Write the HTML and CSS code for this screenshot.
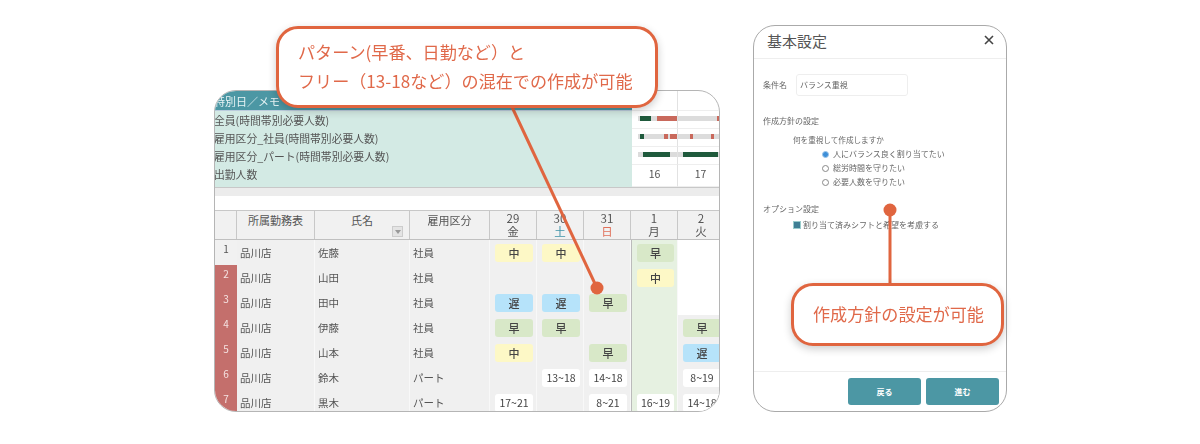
FILE: index.html
```html
<!DOCTYPE html>
<html lang="ja">
<head>
    <meta charset="UTF-8">
    <title>シフト作成</title>
    <link rel="stylesheet" href="styles.css">
</head>
<body>
<div class="page">
    <div class="screen">
        <div class="sum head">
            <div class="sum-label">特別日／メモ</div>
            <div class="sum-cell"></div>
            <div class="sum-cell"></div>
        </div>
        <div class="sum">
            <div class="sum-label">全員(時間帯別必要人数)</div>
            <div class="sum-cell">
                <svg class="bars" width="46" height="18"><rect x="6" y="5" width="40" height="5" fill="#dcdcdc"/><rect x="8" y="5" width="11" height="5" fill="#1f5a3c"/><rect x="25" y="5" width="20" height="5" fill="#c9695c"/></svg>
            </div>
            <div class="sum-cell">
                <svg class="bars" width="46" height="18"><rect x="0" y="5" width="46" height="5" fill="#dcdcdc"/><rect x="39" y="5" width="4" height="5" fill="#c9695c"/></svg>
            </div>
        </div>
        <div class="sum">
            <div class="sum-label">雇用区分_社員(時間帯別必要人数)</div>
            <div class="sum-cell">
                <svg class="bars" width="46" height="18"><rect x="6" y="5" width="40" height="5" fill="#dcdcdc"/><rect x="8" y="5" width="4" height="5" fill="#1f5a3c"/><rect x="32" y="5" width="4" height="5" fill="#c9695c"/><rect x="38" y="5" width="7" height="5" fill="#c9695c"/></svg>
            </div>
            <div class="sum-cell">
                <svg class="bars" width="46" height="18"><rect x="0" y="5" width="46" height="5" fill="#dcdcdc"/><rect x="12" y="5" width="3" height="5" fill="#c9695c"/><rect x="33" y="5" width="3" height="5" fill="#c9695c"/></svg>
            </div>
        </div>
        <div class="sum">
            <div class="sum-label">雇用区分_パート(時間帯別必要人数)</div>
            <div class="sum-cell">
                <svg class="bars" width="46" height="18"><rect x="6" y="5" width="40" height="5" fill="#dcdcdc"/><rect x="11" y="5" width="27" height="5" fill="#1f5a3c"/></svg>
            </div>
            <div class="sum-cell">
                <svg class="bars" width="46" height="18"><rect x="0" y="5" width="46" height="5" fill="#dcdcdc"/><rect x="5" y="5" width="35" height="5" fill="#1f5a3c"/></svg>
            </div>
        </div>
        <div class="sum last">
            <div class="sum-label">出勤人数</div>
            <div class="sum-cell">16</div>
            <div class="sum-cell">17</div>
        </div>
        <div class="strip"></div>
        <div class="gap"></div>

        <div class="row thead">
            <div class="th"></div>
            <div class="th">所属勤務表</div>
            <div class="th th-name">氏名<span class="filter"></span></div>
            <div class="th">雇用区分</div>
            <div class="th th-day">29<br>金</div>
            <div class="th th-day">30<br><span class="sat">土</span></div>
            <div class="th th-day">31<br><span class="sun">日</span></div>
            <div class="th th-day">1<br>月</div>
            <div class="th th-day">2<br>火</div>
        </div>

        <div class="row">
            <div class="no">1</div><div class="td">品川店</div><div class="td">佐藤</div><div class="td">社員</div>
            <div class="td-day"><span class="chip yellow">中</span></div>
            <div class="td-day"><span class="chip yellow">中</span></div>
            <div class="td-day"></div>
            <div class="td-day mon"><span class="chip green">早</span></div>
            <div class="td-day free"></div>
        </div>
        <div class="row">
            <div class="no red">2</div><div class="td">品川店</div><div class="td">山田</div><div class="td">社員</div>
            <div class="td-day"></div>
            <div class="td-day"></div>
            <div class="td-day"></div>
            <div class="td-day mon"><span class="chip yellow">中</span></div>
            <div class="td-day free"></div>
        </div>
        <div class="row">
            <div class="no red">3</div><div class="td">品川店</div><div class="td">田中</div><div class="td">社員</div>
            <div class="td-day"><span class="chip blue">遅</span></div>
            <div class="td-day"><span class="chip blue">遅</span></div>
            <div class="td-day"><span class="chip green">早</span></div>
            <div class="td-day mon"></div>
            <div class="td-day free"></div>
        </div>
        <div class="row">
            <div class="no red">4</div><div class="td">品川店</div><div class="td">伊藤</div><div class="td">社員</div>
            <div class="td-day"><span class="chip green">早</span></div>
            <div class="td-day"><span class="chip green">早</span></div>
            <div class="td-day"></div>
            <div class="td-day mon"></div>
            <div class="td-day"><span class="chip green">早</span></div>
        </div>
        <div class="row">
            <div class="no red">5</div><div class="td">品川店</div><div class="td">山本</div><div class="td">社員</div>
            <div class="td-day"><span class="chip yellow">中</span></div>
            <div class="td-day"></div>
            <div class="td-day"><span class="chip green">早</span></div>
            <div class="td-day mon"></div>
            <div class="td-day"><span class="chip blue">遅</span></div>
        </div>
        <div class="row">
            <div class="no red">6</div><div class="td">品川店</div><div class="td">鈴木</div><div class="td">パート</div>
            <div class="td-day"></div>
            <div class="td-day"><span class="chip white">13~18</span></div>
            <div class="td-day"><span class="chip white">14~18</span></div>
            <div class="td-day mon"></div>
            <div class="td-day"><span class="chip white">8~19</span></div>
        </div>
        <div class="row">
            <div class="no red">7</div><div class="td">品川店</div><div class="td">黒木</div><div class="td">パート</div>
            <div class="td-day"><span class="chip white">17~21</span></div>
            <div class="td-day"></div>
            <div class="td-day"><span class="chip white">8~21</span></div>
            <div class="td-day mon"><span class="chip white">16~19</span></div>
            <div class="td-day"><span class="chip white">14~18</span></div>
        </div>
    </div>

    <div class="panel">
        <div class="panel-head">
            <span class="panel-title">基本設定</span>
            <svg class="close" width="10" height="10" viewBox="0 0 10 10"><path d="M1 1 L9 9 M9 1 L1 9" stroke="#444" stroke-width="1.6" fill="none"/></svg>
        </div>
        <div class="panel-body">
            <div class="field">
                <span>条件名</span>
                <div class="input">バランス重視</div>
            </div>
            <div class="section">作成方針の設定</div>
            <div class="question">何を重視して作成しますか</div>
            <div class="options">
                <div class="option"><span class="radio on"></span>人にバランス良く割り当てたい</div>
                <div class="option"><span class="radio"></span>総労時間を守りたい</div>
                <div class="option"><span class="radio"></span>必要人数を守りたい</div>
            </div>
            <div class="section section-opt">オプション設定</div>
            <div class="check-line"><span class="check"></span>割り当て済みシフトと希望を考慮する</div>
        </div>
        <div class="panel-foot">
            <div class="btn">戻る</div>
            <div class="btn">進む</div>
        </div>
    </div>

    <svg class="lines" width="1200" height="444">
        <path d="M512 107 L597 288" stroke="#e0653f" stroke-width="3" fill="none"/>
        <circle cx="597" cy="288" r="6.5" fill="#e0653f"/>
        <path d="M890 210 L890 284" stroke="#e0653f" stroke-width="3" fill="none"/>
        <circle cx="890" cy="210" r="6.5" fill="#e0653f"/>
    </svg>

    <div class="callout callout-top">パターン(早番、日勤など）と<br>フリー（13-18など）の混在での作成が可能</div>
    <div class="callout callout-side">作成方針の設定が可能</div>
</div>
</body>
</html>
```

FILE: styles.css
```css
* {
    margin: 0;
    padding: 0;
    box-sizing: border-box;
}
body {
    background: #fff;
    font-family: "Noto Sans CJK JP", "Noto Sans", sans-serif;
    color: #555;
}
.page {
    position: relative;
    width: 1200px;
    height: 444px;
    display: flex;
    align-items: flex-end;
    gap: 33px;
    padding: 0 0 32px 214px;
    overflow: hidden;
}

/* shift table */
.screen {
    width: 506px;
    height: 322px;
    border: 1px solid #b5b5b5;
    border-radius: 22px;
    overflow: hidden;
    background: #fff;
    font-size: 10.5px;
    filter: blur(0.4px);
}
.sum {
    display: grid;
    grid-template-columns: 417px 46px 46px;
    height: 18px;
    line-height: 18px;
}
.sum.head {
    height: 20px;
    line-height: 20px;
}
.sum.head .sum-label {
    background: #4c97a4;
    color: #e8f4f5;
    font-size: 11px;
    border-bottom: 1px solid #bcd;
}
.sum.last {
    height: 22px;
}
.sum-label {
    background: #d3eae4;
    color: #555;
    font-size: 10.8px;
    white-space: nowrap;
    overflow: hidden;
    text-indent: -1px;
}
.sum-cell {
    border-right: 1px solid #e2e2e2;
    border-bottom: 1px solid #eee;
    text-align: center;
    overflow: hidden;
}
.bars {
    display: block;
}
.strip {
    height: 9px;
    background: #ececec;
    border-top: 1px solid #c8c8c8;
}
.gap {
    height: 14px;
}
.row {
    display: grid;
    grid-template-columns: 22px 78px 95px 80px 47px 47px 47px 47px 47px;
    height: 25px;
    line-height: 25px;
}
.thead {
    height: 30px;
    line-height: 13px;
    border-top: 1px solid #c8c8c8;
    border-bottom: 1px solid #c0c0c0;
}
.th {
    position: relative;
    background: #f1f1f1;
    border-right: 1px solid #c8c8c8;
    text-align: center;
    font-size: 11px;
    padding-top: 2px;
    line-height: 14px;
}
.th-day {
    padding-top: 1px;
    line-height: 13px;
    font-size: 11.5px;
}
.sat {
    color: #3f93a8;
}
.sun {
    color: #e0705a;
}
.filter {
    position: absolute;
    right: 6px;
    bottom: 2px;
    width: 11px;
    height: 11px;
    border: 1px solid #ccc;
    background: #e4e4e4;
}
.filter::after {
    content: "";
    position: absolute;
    left: 2px;
    top: 3px;
    border-left: 3px solid transparent;
    border-right: 3px solid transparent;
    border-top: 4px solid #999;
}
.no {
    background: #f1f1f1;
    font-size: 10px;
    text-align: center;
    line-height: 18px;
    border-bottom: 1px dotted #ddd;
}
.no.red {
    background: #c46f6c;
    color: #f5e3e2;
    border-bottom: 1px dashed #e6c3c2;
}
.td {
    background: #f0f0f0;
    padding-left: 3px;
    border-bottom: 1px solid #fafafa;
    border-right: 1px solid #f8f8f8;
}
.td-day {
    background: #f0f0f0;
    padding: 4px 3px 3px 5px;
    border-bottom: 1px solid #fafafa;
    border-right: 1px solid #f8f8f8;
}
.td-day.mon {
    background: #e6f1e1;
    border-left: 1px solid #bbb;
}
.td-day.free {
    background: #fff;
    border-bottom-color: #eee;
}
.chip {
    display: block;
    height: 18px;
    line-height: 18px;
    border-radius: 3px;
    text-align: center;
    font-size: 11px;
    font-weight: 500;
    color: #444;
}
.yellow {
    background: #fdf8c6;
}
.blue {
    background: #b6e3fa;
}
.green {
    background: #d8e8c8;
}
.white {
    background: #fff;
    font-size: 10.5px;
    font-weight: 400;
}

/* settings dialog */
.panel {
    width: 254px;
    height: 387px;
    border: 1px solid #aaa;
    border-radius: 22px;
    background: #fff;
    display: flex;
    flex-direction: column;
    overflow: hidden;
}
.panel-head {
    display: flex;
    align-items: center;
    justify-content: space-between;
    height: 33px;
    padding: 0 12px 4px 13px;
    border-bottom: 1px solid #eee;
}
.panel-title {
    font-size: 15px;
    color: #555;
}
.panel-body {
    flex: 1;
    padding: 15px 9px 0 9px;
    font-size: 8px;
    color: #666;
    line-height: 14px;
    filter: blur(0.45px);
}
.field {
    display: flex;
    align-items: center;
    gap: 9px;
}
.input {
    width: 112px;
    height: 22px;
    line-height: 20px;
    border: 1px solid #eee;
    border-radius: 3px;
    padding-left: 3px;
}
.section {
    margin-top: 18px;
}
.question {
    margin: 5px 0 0 30px;
    font-size: 7.6px;
}
.options {
    margin-left: 59px;
}
.option {
    display: flex;
    align-items: center;
    gap: 4px;
}
.radio {
    width: 7px;
    height: 7px;
    border: 1px solid #888;
    border-radius: 50%;
    background: #fff;
}
.radio.on {
    background: #3d8fd8;
    border-color: #9cc4e8;
}
.section-opt {
    margin-top: 13px;
}
.check-line {
    display: flex;
    align-items: center;
    gap: 2px;
    margin: 2px 0 0 30px;
}
.check {
    width: 8px;
    height: 8px;
    background: #3f7f95;
    border: 1px solid #9cc;
}
.panel-foot {
    display: flex;
    justify-content: flex-end;
    gap: 5px;
    height: 40px;
    padding: 6px 7px 0 0;
    border-top: 1px solid #eee;
}
.btn {
    width: 73px;
    height: 27px;
    line-height: 27px;
    border-radius: 3px;
    background: #4c97a4;
    color: #fff;
    font-size: 8px;
    font-weight: 700;
    text-align: center;
}

/* callouts */
.lines {
    position: absolute;
    left: 0;
    top: 0;
}
.callout {
    position: absolute;
    background: #fff;
    border: 3px solid #e0653f;
    border-radius: 22px;
    color: #e0694a;
    font-size: 17.1px;
    box-shadow: 0 3px 8px rgba(0, 0, 0, 0.2);
}
.callout-top {
    left: 276px;
    top: 26px;
    width: 382px;
    height: 82px;
    padding: 8px 0 0 19px;
    line-height: 29px;
}
.callout-side {
    left: 791px;
    top: 283px;
    width: 213px;
    height: 63px;
    padding-left: 19px;
    line-height: 56px;
}
```
